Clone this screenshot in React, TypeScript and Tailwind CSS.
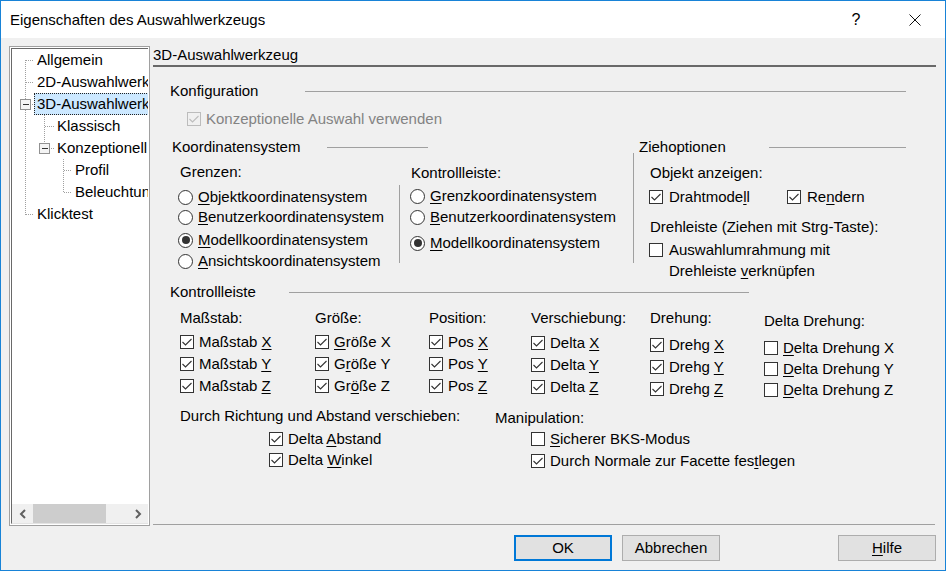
import React from "react";

const Check = ({ checked = false, disabled = false }: { checked?: boolean; disabled?: boolean }) => (
  <span
    className={
      disabled
        ? "w-[14px] h-[14px] border border-[#bcbcbc] bg-[#f0f0f0] flex items-center justify-center shrink-0"
        : "w-[14px] h-[14px] border border-[#333333] bg-white flex items-center justify-center shrink-0"
    }
  >
    {checked && (
      <svg width="12" height="12" viewBox="0 0 12 12">
        <path d="M1.5 6 L4.5 9 L10.5 3" fill="none" stroke={disabled ? "#bcbcbc" : "#333333"} strokeWidth="1.1" />
      </svg>
    )}
  </span>
);

const Radio = ({ checked = false }: { checked?: boolean }) => (
  <span className="w-[15px] h-[15px] rounded-full border border-[#333333] bg-white flex items-center justify-center shrink-0">
    {checked && <span className="w-[8px] h-[8px] rounded-full bg-[#333333]" />}
  </span>
);

const U = ({ children }: { children: React.ReactNode }) => <span className="underline underline-offset-2">{children}</span>;

const CheckRow = ({
  checked,
  children,
  h = "h-[22px]",
}: {
  checked: boolean;
  children: React.ReactNode;
  h?: string;
}) => (
  <div className={"flex items-center gap-[5px] whitespace-nowrap " + h}>
    <Check checked={checked} />
    <span>{children}</span>
  </div>
);

const RadioRow = ({ checked = false, children, mt }: { checked?: boolean; children: React.ReactNode; mt: string }) => (
  <div className={"flex items-center gap-[5px] h-[18px] whitespace-nowrap " + mt}>
    <Radio checked={checked} />
    <span>{children}</span>
  </div>
);

const TreeLines = () => (
  <svg className="absolute left-0 top-0 pointer-events-none" width="134" height="200" shapeRendering="crispEdges">
    <g stroke="#a0a0a0" strokeWidth="1" strokeDasharray="1 1">
      <line x1="13.5" y1="11" x2="13.5" y2="166" />
      <line x1="14" y1="11.5" x2="22" y2="11.5" />
      <line x1="14" y1="33.5" x2="22" y2="33.5" />
      <line x1="18" y1="55.5" x2="22" y2="55.5" />
      <line x1="14" y1="165.5" x2="22" y2="165.5" />
      <line x1="32.5" y1="66" x2="32.5" y2="99" />
      <line x1="33" y1="77.5" x2="42" y2="77.5" />
      <line x1="37" y1="99.5" x2="42" y2="99.5" />
      <line x1="51.5" y1="110" x2="51.5" y2="143" />
      <line x1="52" y1="121.5" x2="60" y2="121.5" />
      <line x1="52" y1="143.5" x2="60" y2="143.5" />
    </g>
    <rect x="8.5" y="50.5" width="10" height="10" fill="#f4f4f4" stroke="#919191" />
    <line x1="11" y1="55.5" x2="17" y2="55.5" stroke="#333" />
    <rect x="27.5" y="94.5" width="10" height="10" fill="#f4f4f4" stroke="#919191" />
    <line x1="30" y1="99.5" x2="36" y2="99.5" stroke="#333" />
  </svg>
);

const TreeRow = ({ pl, children, selected = false }: { pl: string; children: React.ReactNode; selected?: boolean }) =>
  selected ? (
    <div className="h-[22px] flex items-stretch whitespace-nowrap">
      <div className="ml-[22px] flex-1 bg-[#cce8ff] border border-dotted border-[#222222] pl-[2px] flex items-center">
        {children}
      </div>
    </div>
  ) : (
    <div className={"h-[22px] flex items-center whitespace-nowrap " + pl}>{children}</div>
  );

export default function App() {
  return (
    <div className="w-[946px] h-[571px] border border-[#1883d7] bg-[#f0f0f0] flex flex-col font-['Liberation_Sans',Arial,sans-serif] text-[15px] leading-[18px] text-black overflow-hidden">
      <div className="h-[37px] bg-white flex items-center shrink-0">
        <div className="pl-[9px] flex-1 pt-[1px]">Eigenschaften des Auswahlwerkzeugs</div>
        <div className="w-[20px] text-center mr-[43px] text-[16px]">?</div>
        <div className="mr-[24px] flex items-center">
          <svg width="12" height="12" viewBox="0 0 12 12">
            <path d="M0.5 0.5 L11.5 11.5 M11.5 0.5 L0.5 11.5" stroke="#111" strokeWidth="1" />
          </svg>
        </div>
      </div>

      <div className="flex-1 flex pl-[8px] pt-[8px]">
        <div className="w-[141px] h-[480px] border border-[#a0a0a0] p-px bg-white shrink-0">
          <div className="w-full h-full border-l border-t border-[#696969] border-b border-b-[#e3e3e3] flex flex-col">
            <div className="flex-1 relative overflow-hidden">
              <TreeLines />
              <div className="relative flex flex-col">
                <TreeRow pl="pl-[25px]">Allgemein</TreeRow>
                <TreeRow pl="pl-[25px]">2D-Auswahlwerkzeug</TreeRow>
                <TreeRow pl="pl-[25px]" selected>
                  3D-Auswahlwerkzeug
                </TreeRow>
                <TreeRow pl="pl-[45px]">Klassisch</TreeRow>
                <TreeRow pl="pl-[45px]">Konzeptionell</TreeRow>
                <TreeRow pl="pl-[63px]">Profil</TreeRow>
                <TreeRow pl="pl-[63px]">Beleuchtung</TreeRow>
                <TreeRow pl="pl-[25px]">Klicktest</TreeRow>
              </div>
            </div>
            <div className="h-[19px] bg-[#f0f0f0] flex items-stretch shrink-0">
              <div className="w-[21px] flex items-center justify-center">
                <svg width="8" height="10" viewBox="0 0 8 10">
                  <path d="M6 1 L2 5 L6 9" fill="none" stroke="#606060" strokeWidth="2" />
                </svg>
              </div>
              <div className="w-[73px] bg-[#cdcdcd]" />
              <div className="flex-1" />
              <div className="w-[21px] flex items-center justify-center">
                <svg width="8" height="10" viewBox="0 0 8 10">
                  <path d="M2 1 L6 5 L2 9" fill="none" stroke="#606060" strokeWidth="2" />
                </svg>
              </div>
            </div>
          </div>
        </div>

        <div className="ml-[3px] w-[783px] flex flex-col">
          <div className="h-[21px] border-b-2 border-[#696969] flex items-end">
            <span className="leading-[18px] pb-[1px]">3D-Auswahlwerkzeug</span>
          </div>

          <div className="mt-[15px] h-[18px] flex items-center pl-[17px]">
            <div className="w-[135px]">Konfiguration</div>
            <div className="w-[601px] h-px bg-[#a0a0a0]" />
          </div>
          <div className="mt-[10px] h-[18px] pl-[34px] flex items-center gap-[5px]">
            <Check checked disabled />
            <span className="text-[#838383]">Konzeptionelle Auswahl verwenden</span>
          </div>

          <div className="mt-[10px] h-[145px] flex">
            <div className="w-[480px] flex flex-col">
              <div className="h-[18px] flex items-center pl-[19px]">
                <div className="w-[155px]">Koordinatensystem</div>
                <div className="w-[101px] h-px bg-[#a0a0a0]" />
              </div>
              <div className="flex">
                <div className="w-[246px] pl-[25px] flex flex-col">
                  <div className="mt-[7px] ml-[2px] h-[18px]">Grenzen:</div>
                  <RadioRow mt="mt-[7px]">
                    <U>O</U>bjektkoordinatensystem
                  </RadioRow>
                  <RadioRow mt="mt-[2px]">
                    <U>B</U>enutzerkoordinatensystem
                  </RadioRow>
                  <RadioRow mt="mt-[5px]" checked>
                    <U>M</U>odellkoordinatensystem
                  </RadioRow>
                  <RadioRow mt="mt-[3px]">
                    <U>A</U>nsichtskoordinatensystem
                  </RadioRow>
                </div>
                <div className="w-px h-[78px] mt-[29px] bg-[#a0a0a0]" />
                <div className="pl-[10px] flex flex-col">
                  <div className="mt-[8px] ml-[1px] h-[18px]">Kontrollleiste:</div>
                  <RadioRow mt="mt-[5px]">
                    <U>G</U>renzkoordinatensystem
                  </RadioRow>
                  <RadioRow mt="mt-[3px]">
                    <U>B</U>enutzerkoordinatensystem
                  </RadioRow>
                  <RadioRow mt="mt-[8px]" checked>
                    <U>M</U>odellkoordinatensystem
                  </RadioRow>
                </div>
              </div>
            </div>
            <div className="w-px h-[110px] mt-[15px] bg-[#a0a0a0]" />
            <div className="pl-[5px] flex flex-col">
              <div className="h-[18px] flex items-center">
                <div className="w-[130px]">Ziehoptionen</div>
                <div className="w-[137px] h-px bg-[#a0a0a0]" />
              </div>
              <div className="mt-[8px] ml-[11px] h-[18px]">Objekt anzeigen:</div>
              <div className="mt-[6px] ml-[10px] h-[18px] flex items-center">
                <div className="w-[138px] flex items-center gap-[6px]">
                  <Check checked />
                  <span>
                    Drahtmode<U>l</U>l
                  </span>
                </div>
                <div className="flex items-center gap-[6px]">
                  <Check checked />
                  <span>
                    Re<U>n</U>dern
                  </span>
                </div>
              </div>
              <div className="mt-[12px] ml-[11px] h-[18px] whitespace-nowrap">Drehleiste (Ziehen mit Strg-Taste):</div>
              <div className="mt-[3px] ml-[10px] flex items-start">
                <div className="mt-[4px]">
                  <Check />
                </div>
                <div className="ml-[6px] leading-[21px]">
                  Auswahlumrahmung mit
                  <br />
                  Drehleiste <U>v</U>erknüpfen
                </div>
              </div>
            </div>
          </div>

          <div className="h-[18px] flex items-center pl-[17px]">
            <div className="w-[119px]">Kontrollleiste</div>
            <div className="w-[460px] h-px bg-[#a0a0a0]" />
          </div>
          <div className="h-[104px] flex pl-[27px]">
            <div className="w-[135px] flex flex-col">
              <div className="mt-[8px] h-[18px]">Maßstab:</div>
              <div className="mt-[4px]">
                <CheckRow checked>
                  Maßstab <U>X</U>
                </CheckRow>
                <CheckRow checked>
                  Maßstab <U>Y</U>
                </CheckRow>
                <CheckRow checked>
                  Maßstab <U>Z</U>
                </CheckRow>
              </div>
            </div>
            <div className="w-[114px] flex flex-col">
              <div className="mt-[8px] h-[18px]">Größe:</div>
              <div className="mt-[4px]">
                <CheckRow checked>
                  <U>G</U>röße X
                </CheckRow>
                <CheckRow checked>
                  G<U>r</U>öße Y
                </CheckRow>
                <CheckRow checked>
                  Gr<U>ö</U>ße Z
                </CheckRow>
              </div>
            </div>
            <div className="w-[102px] flex flex-col">
              <div className="mt-[8px] h-[18px]">Position:</div>
              <div className="mt-[4px]">
                <CheckRow checked>
                  Pos <U>X</U>
                </CheckRow>
                <CheckRow checked>
                  Pos <U>Y</U>
                </CheckRow>
                <CheckRow checked>
                  Pos <U>Z</U>
                </CheckRow>
              </div>
            </div>
            <div className="w-[119px] flex flex-col">
              <div className="mt-[8px] h-[18px]">Verschiebung:</div>
              <div className="mt-[5px]">
                <CheckRow checked>
                  Delta <U>X</U>
                </CheckRow>
                <CheckRow checked>
                  Delta <U>Y</U>
                </CheckRow>
                <CheckRow checked>
                  Delta <U>Z</U>
                </CheckRow>
              </div>
            </div>
            <div className="w-[114px] flex flex-col">
              <div className="mt-[8px] h-[18px]">Drehung:</div>
              <div className="mt-[7px]">
                <CheckRow checked>
                  Drehg <U>X</U>
                </CheckRow>
                <CheckRow checked>
                  Drehg <U>Y</U>
                </CheckRow>
                <CheckRow checked>
                  Drehg <U>Z</U>
                </CheckRow>
              </div>
            </div>
            <div className="w-[170px] flex flex-col">
              <div className="mt-[11px] h-[18px]">Delta Drehung:</div>
              <div className="mt-[7px]">
                <CheckRow checked={false} h="h-[21px]">
                  <U>D</U>elta Drehung X
                </CheckRow>
                <CheckRow checked={false} h="h-[21px]">
                  <U>D</U>elta Drehung Y
                </CheckRow>
                <CheckRow checked={false} h="h-[21px]">
                  <U>D</U>elta Drehung Z
                </CheckRow>
              </div>
            </div>
          </div>

          <div className="h-[67px] flex pl-[27px]">
            <div className="w-[315px] flex flex-col">
              <div className="mt-[2px] h-[18px] whitespace-nowrap">Durch Richtung und Abstand verschieben:</div>
              <div className="mt-[3px] ml-[89px]">
                <CheckRow checked h="h-[21px]">
                  Delta <U>A</U>bstand
                </CheckRow>
                <CheckRow checked h="h-[21px]">
                  Delta <U>W</U>inkel
                </CheckRow>
              </div>
            </div>
            <div className="flex flex-col">
              <div className="mt-[4px] h-[18px]">Manipulation:</div>
              <div className="mt-[1px] ml-[36px]">
                <CheckRow checked={false}>
                  <U>S</U>icherer BKS-Modus
                </CheckRow>
                <CheckRow checked>
                  Durch Normale zur Facette fes<U>t</U>legen
                </CheckRow>
              </div>
            </div>
          </div>

          <div className="mt-[52px] w-[782px] h-px bg-[#a0a0a0]" />
          <div className="mt-[10px] h-[26px] flex">
            <button className="ml-[361px] w-[98px] h-[26px] border-2 border-[#0078d7] bg-[#e1e1e1] flex items-center justify-center">
              OK
            </button>
            <button className="ml-[10px] w-[98px] h-[26px] border border-[#adadad] bg-[#e1e1e1] flex items-center justify-center">
              Abbrechen
            </button>
            <button className="ml-[118px] w-[98px] h-[26px] border border-[#adadad] bg-[#e1e1e1] flex items-center justify-center">
              <span>
                <U>H</U>ilfe
              </span>
            </button>
          </div>
        </div>
      </div>
    </div>
  );
}
